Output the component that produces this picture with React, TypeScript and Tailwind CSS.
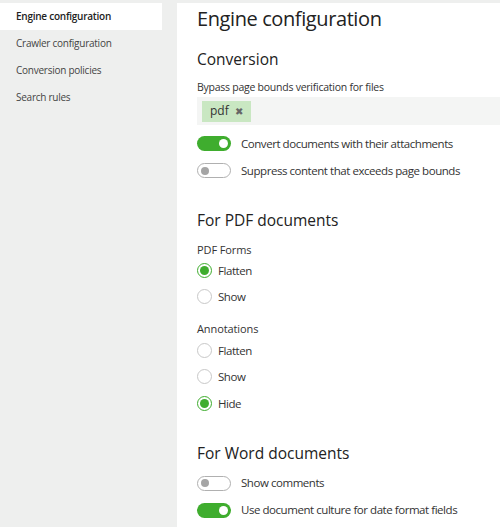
import { useState } from "react";

const navItems = [
  "Engine configuration",
  "Crawler configuration",
  "Conversion policies",
  "Search rules",
];

function Toggle({ on, label }: { on: boolean; label: string }) {
  return (
    <div className="flex h-[27px] items-center gap-[10px]">
      <span
        className={`flex h-[15px] w-[34px] items-center rounded-full px-[3px] ${
          on
            ? "justify-end bg-[#3fad2e]"
            : "justify-start border border-[#b0b0b0] bg-white"
        }`}
      >
        <span
          className={`rounded-full ${on ? "h-[9px] w-[9px] bg-white" : "h-[8px] w-[8px] bg-[#a5a5a5]"}`}
        />
      </span>
      <span className="text-[11.5px] tracking-[-0.45px] text-[#333]">{label}</span>
    </div>
  );
}

function Radio({ checked, label }: { checked: boolean; label: string }) {
  return (
    <div className="flex h-[26.5px] items-center gap-[6px]">
      <span
        className={`flex h-[15px] w-[15px] items-center justify-center rounded-full ${
          checked ? "border-[1.5px] border-[#3fad2e]" : "border border-[#c8c8c8]"
        }`}
      >
        {checked && <span className="h-[9px] w-[9px] rounded-full bg-[#3fad2e]" />}
      </span>
      <span className="text-[11.5px] tracking-[-0.45px] text-[#333]">{label}</span>
    </div>
  );
}

export default function App() {
  const [active] = useState(0);

  return (
    <div
      className="flex h-[527px] w-[500px] overflow-hidden bg-[#eeefee] pt-[3px] text-[#333]"
      style={{ fontFamily: '"Open Sans", "Noto Sans", sans-serif' }}
    >
      <nav className="w-[177px] shrink-0">
        <ul className="w-[162px]">
          {navItems.map((item, i) => (
            <li
              key={item}
              className={`flex h-[27px] items-center pl-[16px] text-[10px] tracking-[-0.25px] ${
                i === active ? "bg-white font-semibold text-[#222]" : "text-[#444]"
              }`}
            >
              {item}
            </li>
          ))}
        </ul>
      </nav>

      <main className="flex-1 bg-white pl-[20px]">
        <h1 className="mt-[1px] text-[20px] leading-[30px] tracking-[-0.4px] text-[#222]">
          Engine configuration
        </h1>

        <h2 className="mt-[14px] text-[15.5px] leading-[22px] text-[#222]">Conversion</h2>
        <p className="mt-[10px] text-[10.5px] leading-[15px] tracking-[-0.25px] text-[#333]">
          Bypass page bounds verification for files
        </p>
        <div className="mt-[2px] flex h-[28px] items-center bg-[#f4f5f4] pl-[5px]">
          <span className="flex h-[21px] items-center gap-[6px] bg-[#c9e7c2] px-[8px] text-[12px] text-[#333]">
            pdf
            <span className="text-[10px] text-[#666]">✖</span>
          </span>
        </div>
        <div className="mt-[5px]">
          <Toggle on label="Convert documents with their attachments" />
          <Toggle on={false} label="Suppress content that exceeds page bounds" />
        </div>

        <h2 className="mt-[25px] text-[15.5px] leading-[22px] text-[#222]">
          For PDF documents
        </h2>
        <p className="mt-[11px] text-[11px] leading-[16px] tracking-[-0.1px] text-[#333]">
          PDF Forms
        </p>
        <div className="-mt-[1px]">
          <Radio checked label="Flatten" />
          <Radio checked={false} label="Show" />
        </div>
        <p className="mt-[11px] text-[11px] leading-[16px] tracking-[-0.1px] text-[#333]">
          Annotations
        </p>
        <div>
          <Radio checked={false} label="Flatten" />
          <Radio checked={false} label="Show" />
          <Radio checked label="Hide" />
        </div>

        <h2 className="mt-[25px] text-[15.5px] leading-[22px] text-[#222]">
          For Word documents
        </h2>
        <div className="mt-[6px]">
          <Toggle on={false} label="Show comments" />
          <Toggle on label="Use document culture for date format fields" />
        </div>
      </main>
    </div>
  );
}
